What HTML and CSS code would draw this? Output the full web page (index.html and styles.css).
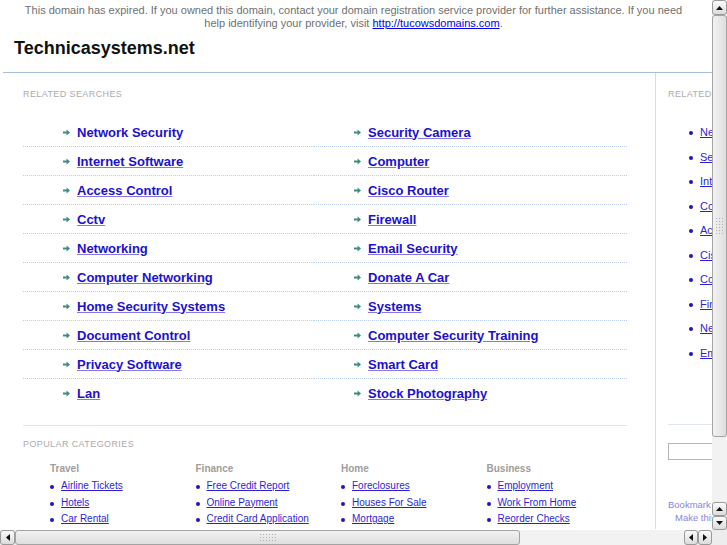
FILE: index.html
```html
<!DOCTYPE html>
<html>
<head>
<meta charset="utf-8">
<link rel="stylesheet" href="styles.css">
</head>
<body>
<div class="screen">
  <div class="top">
    <div class="viewport">
      <div class="page">
        <div class="header">
          <p class="notice">This domain has expired. If you owned this domain, contact your domain registration service provider for further assistance. If you need<br>help identifying your provider, visit <a href="#">http://tucowsdomains.com</a>.</p>
          <h1 class="title">Technicasystems.net</h1>
        </div>
        <div class="content">
          <div class="main">
            <div class="label">Related Searches</div>
            <ul class="links">
              <li><svg class="arr" viewBox="0 0 7 7"><path d="M0 2.6h3.6V0.6L7 3.5 3.6 6.4V4.4H0z"/></svg><a class="hover" href="#">Network Security</a></li>
              <li><svg class="arr" viewBox="0 0 7 7"><path d="M0 2.6h3.6V0.6L7 3.5 3.6 6.4V4.4H0z"/></svg><a href="#">Security Camera</a></li>
              <li><svg class="arr" viewBox="0 0 7 7"><path d="M0 2.6h3.6V0.6L7 3.5 3.6 6.4V4.4H0z"/></svg><a href="#">Internet Software</a></li>
              <li><svg class="arr" viewBox="0 0 7 7"><path d="M0 2.6h3.6V0.6L7 3.5 3.6 6.4V4.4H0z"/></svg><a href="#">Computer</a></li>
              <li><svg class="arr" viewBox="0 0 7 7"><path d="M0 2.6h3.6V0.6L7 3.5 3.6 6.4V4.4H0z"/></svg><a href="#">Access Control</a></li>
              <li><svg class="arr" viewBox="0 0 7 7"><path d="M0 2.6h3.6V0.6L7 3.5 3.6 6.4V4.4H0z"/></svg><a href="#">Cisco Router</a></li>
              <li><svg class="arr" viewBox="0 0 7 7"><path d="M0 2.6h3.6V0.6L7 3.5 3.6 6.4V4.4H0z"/></svg><a href="#">Cctv</a></li>
              <li><svg class="arr" viewBox="0 0 7 7"><path d="M0 2.6h3.6V0.6L7 3.5 3.6 6.4V4.4H0z"/></svg><a href="#">Firewall</a></li>
              <li><svg class="arr" viewBox="0 0 7 7"><path d="M0 2.6h3.6V0.6L7 3.5 3.6 6.4V4.4H0z"/></svg><a href="#">Networking</a></li>
              <li><svg class="arr" viewBox="0 0 7 7"><path d="M0 2.6h3.6V0.6L7 3.5 3.6 6.4V4.4H0z"/></svg><a href="#">Email Security</a></li>
              <li><svg class="arr" viewBox="0 0 7 7"><path d="M0 2.6h3.6V0.6L7 3.5 3.6 6.4V4.4H0z"/></svg><a href="#">Computer Networking</a></li>
              <li><svg class="arr" viewBox="0 0 7 7"><path d="M0 2.6h3.6V0.6L7 3.5 3.6 6.4V4.4H0z"/></svg><a href="#">Donate A Car</a></li>
              <li><svg class="arr" viewBox="0 0 7 7"><path d="M0 2.6h3.6V0.6L7 3.5 3.6 6.4V4.4H0z"/></svg><a href="#">Home Security Systems</a></li>
              <li><svg class="arr" viewBox="0 0 7 7"><path d="M0 2.6h3.6V0.6L7 3.5 3.6 6.4V4.4H0z"/></svg><a href="#">Systems</a></li>
              <li><svg class="arr" viewBox="0 0 7 7"><path d="M0 2.6h3.6V0.6L7 3.5 3.6 6.4V4.4H0z"/></svg><a href="#">Document Control</a></li>
              <li><svg class="arr" viewBox="0 0 7 7"><path d="M0 2.6h3.6V0.6L7 3.5 3.6 6.4V4.4H0z"/></svg><a href="#">Computer Security Training</a></li>
              <li><svg class="arr" viewBox="0 0 7 7"><path d="M0 2.6h3.6V0.6L7 3.5 3.6 6.4V4.4H0z"/></svg><a href="#">Privacy Software</a></li>
              <li><svg class="arr" viewBox="0 0 7 7"><path d="M0 2.6h3.6V0.6L7 3.5 3.6 6.4V4.4H0z"/></svg><a href="#">Smart Card</a></li>
              <li class="last"><svg class="arr" viewBox="0 0 7 7"><path d="M0 2.6h3.6V0.6L7 3.5 3.6 6.4V4.4H0z"/></svg><a href="#">Lan</a></li>
              <li class="last"><svg class="arr" viewBox="0 0 7 7"><path d="M0 2.6h3.6V0.6L7 3.5 3.6 6.4V4.4H0z"/></svg><a href="#">Stock Photography</a></li>
            </ul>
            <div class="popular">
              <div class="label">Popular Categories</div>
              <div class="cats">
                <div class="cat">
                  <div class="cat-title">Travel</div>
                  <ul><li><a href="#">Airline Tickets</a></li><li><a href="#">Hotels</a></li><li><a href="#">Car Rental</a></li></ul>
                </div>
                <div class="cat">
                  <div class="cat-title">Finance</div>
                  <ul><li><a href="#">Free Credit Report</a></li><li><a href="#">Online Payment</a></li><li><a href="#">Credit Card Application</a></li></ul>
                </div>
                <div class="cat">
                  <div class="cat-title">Home</div>
                  <ul><li><a href="#">Foreclosures</a></li><li><a href="#">Houses For Sale</a></li><li><a href="#">Mortgage</a></li></ul>
                </div>
                <div class="cat">
                  <div class="cat-title">Business</div>
                  <ul><li><a href="#">Employment</a></li><li><a href="#">Work From Home</a></li><li><a href="#">Reorder Checks</a></li></ul>
                </div>
              </div>
            </div>
          </div>
          <div class="side">
            <div class="label">Related Searches</div>
            <ul class="side-links">
              <li><a href="#">Network Security</a></li>
              <li><a href="#">Security Camera</a></li>
              <li><a href="#">Internet Software</a></li>
              <li><a href="#">Computer</a></li>
              <li><a href="#">Access Control</a></li>
              <li><a href="#">Cisco Router</a></li>
              <li><a href="#">Cctv</a></li>
              <li><a href="#">Firewall</a></li>
              <li><a href="#">Networking</a></li>
              <li><a href="#">Email Security</a></li>
            </ul>
            <div class="side-search">
              <input class="search-box" type="text">
            </div>
            <div class="bookmark">Bookmark this page</div>
            <div class="homepage">Make this your homepage</div>
          </div>
        </div>
      </div>
    </div>
    <div class="vscroll">
      <div class="btn"><svg viewBox="0 0 7 4" class="tri"><path d="M0 4L3.5 0 7 4z"/></svg></div>
      <div class="vthumb"><span class="grip vgrip"></span></div>
      <div class="vtrack"></div>
      <div class="btn"><svg viewBox="0 0 7 4" class="tri"><path d="M0 4L3.5 0 7 4z"/></svg></div>
      <div class="btn"><svg viewBox="0 0 7 4" class="tri"><path d="M0 0L3.5 4 7 0z"/></svg></div>
    </div>
  </div>
  <div class="hscroll">
    <div class="btn"><svg viewBox="0 0 4 7" class="tri-h"><path d="M4 0L0 3.5 4 7z"/></svg></div>
    <div class="hthumb"><span class="grip hgrip"></span></div>
    <div class="htrack"></div>
    <div class="btn"><svg viewBox="0 0 4 7" class="tri-h"><path d="M4 0L0 3.5 4 7z"/></svg></div>
    <div class="btn"><svg viewBox="0 0 4 7" class="tri-h"><path d="M0 0L4 3.5 0 7z"/></svg></div>
    <div class="corner"></div>
  </div>
</div>
</body>
</html>
```

FILE: styles.css
```css
html, body {
  margin: 0;
  padding: 0;
}
body {
  width: 727px;
  height: 545px;
  overflow: hidden;
  font-family: "Liberation Sans", Arial, Helvetica, sans-serif;
  background: #fff;
}
ul {
  list-style: none;
  margin: 0;
  padding: 0;
}
.screen {
  display: flex;
  flex-direction: column;
  width: 727px;
  height: 545px;
}
.top {
  display: flex;
  height: 530px;
}
.viewport {
  width: 712px;
  height: 530px;
  overflow: hidden;
  background: #fff;
}
.page {
  width: 900px;
}

/* header */
.header {
  margin-left: 3px;
  padding-bottom: 13px;
  border-bottom: 1px solid #a7bfdf;
}
.notice {
  width: 701px;
  margin: 4px 0 0;
  text-align: center;
  white-space: nowrap;
  font-size: 11px;
  line-height: 13px;
  color: #707070;
}
.notice a {
  color: #0000ee;
}
.title {
  margin: 7px 0 0 11px;
  font-size: 18px;
  line-height: 22px;
  font-weight: bold;
  color: #111;
}

/* content */
.content {
  display: flex;
  align-items: stretch;
}
.main {
  box-sizing: border-box;
  width: 651px;
  margin-left: 5px;
  padding: 15px 0 0 18px;
  border-right: 1px solid #d3deec;
  height: 456px;
}
.label {
  font-size: 9px;
  line-height: 12px;
  letter-spacing: 0.4px;
  text-transform: uppercase;
  color: #ababab;
}
.links {
  display: grid;
  grid-template-columns: 291px 313px;
  margin-top: 18px;
}
.links li {
  display: flex;
  align-items: center;
  height: 28px;
  padding-left: 40px;
  border-bottom: 1px dotted #b9cde9;
}
.links li.last {
  border-bottom: 0;
  height: 29px;
}
.arr {
  width: 7px;
  height: 7px;
  margin-right: 7px;
  fill: #3c8c84;
  flex: none;
}
.links a {
  font-size: 13px;
  font-weight: bold;
  color: #2010cc;
  text-decoration: underline;
  text-decoration-color: #8577e6;
}
.links a.hover {
  text-decoration: none;
}
.popular {
  width: 604px;
  margin-top: 17px;
  padding-top: 12px;
  border-top: 1px solid #dfe6f0;
}
.cats {
  display: grid;
  grid-template-columns: repeat(4, 145.5px);
  margin: 12px 0 0 27px;
}
.cat-title {
  font-size: 10px;
  line-height: 14px;
  font-weight: bold;
  color: #9d9d9d;
}
.cat ul {
  margin-top: 2px;
}
.cat li {
  position: relative;
  padding-left: 11px;
  font-size: 10px;
  line-height: 16.5px;
}
.cat li::before,
.side-links li::before {
  content: "";
  position: absolute;
  top: 50%;
  width: 4px;
  height: 4px;
  margin-top: -1px;
  border-radius: 50%;
  background: #2414b8;
}
.cat li::before {
  left: 0;
}
.cat a {
  color: #2d1fd6;
}

/* sidebar */
.side {
  padding: 15px 0 0 12px;
  width: 220px;
  flex: none;
}
.side-links {
  margin-top: 20px;
}
.side-links li {
  position: relative;
  padding-left: 32px;
  font-size: 11px;
  line-height: 24.5px;
}
.side-links li::before {
  left: 21px;
}
.side-links a {
  color: #2d1fd6;
}
.side-search {
  margin-top: 59px;
  padding-top: 18px;
  border-top: 1px solid #dfe6f0;
}
.search-box {
  display: block;
  box-sizing: border-box;
  width: 160px;
  height: 17px;
  margin: 0;
  border: 1px solid #b5b5b5;
  background: #fff;
}
.bookmark,
.homepage {
  font-size: 9.5px;
  line-height: 13px;
  color: #8a86d8;
}
.bookmark {
  margin-top: 38px;
}
.homepage {
  padding-left: 7px;
}

/* scrollbars */
.vscroll {
  width: 15px;
  display: flex;
  flex-direction: column;
  background: #eeeeee;
}
.hscroll {
  height: 15px;
  display: flex;
  background: #eeeeee;
}
.btn {
  box-sizing: border-box;
  width: 15px;
  height: 14px;
  flex: none;
  display: flex;
  align-items: center;
  justify-content: center;
  border: 1px solid #9a9a9a;
  border-radius: 3px;
  background: linear-gradient(#fbfbfb, #dcdcdc);
}
.vscroll .btn:first-child {
  height: 15px;
}
.hscroll .btn {
  width: 14px;
  height: 15px;
}
.hscroll .btn:first-child {
  width: 15px;
}
.tri {
  width: 7px;
  height: 4px;
  fill: #111;
}
.tri-h {
  width: 4px;
  height: 7px;
  fill: #111;
}
.vthumb {
  box-sizing: border-box;
  height: 422px;
  flex: none;
  display: flex;
  align-items: center;
  justify-content: center;
  border: 1px solid #a3a3a3;
  border-radius: 3px;
  background: linear-gradient(90deg, #f2f2f2, #dedede);
}
.hthumb {
  box-sizing: border-box;
  width: 505px;
  flex: none;
  display: flex;
  align-items: center;
  justify-content: center;
  border: 1px solid #a3a3a3;
  border-radius: 3px;
  background: linear-gradient(#f2f2f2, #dedede);
}
.grip {
  display: block;
  background-image: radial-gradient(circle, #b0b0b0 0.7px, transparent 0.8px);
  background-size: 3px 3px;
}
.vgrip {
  width: 9px;
  height: 18px;
}
.hgrip {
  width: 18px;
  height: 9px;
}
.vtrack {
  flex: 1;
  background-color: #f2f2f2;
  background-image: radial-gradient(circle, #dcdcdc 0.6px, transparent 0.7px);
  background-size: 2px 2px;
}
.htrack {
  flex: 1;
  background-color: #f2f2f2;
  background-image: radial-gradient(circle, #dcdcdc 0.6px, transparent 0.7px);
  background-size: 2px 2px;
}
.corner {
  width: 15px;
  flex: none;
  background: #ededed;
}
```
